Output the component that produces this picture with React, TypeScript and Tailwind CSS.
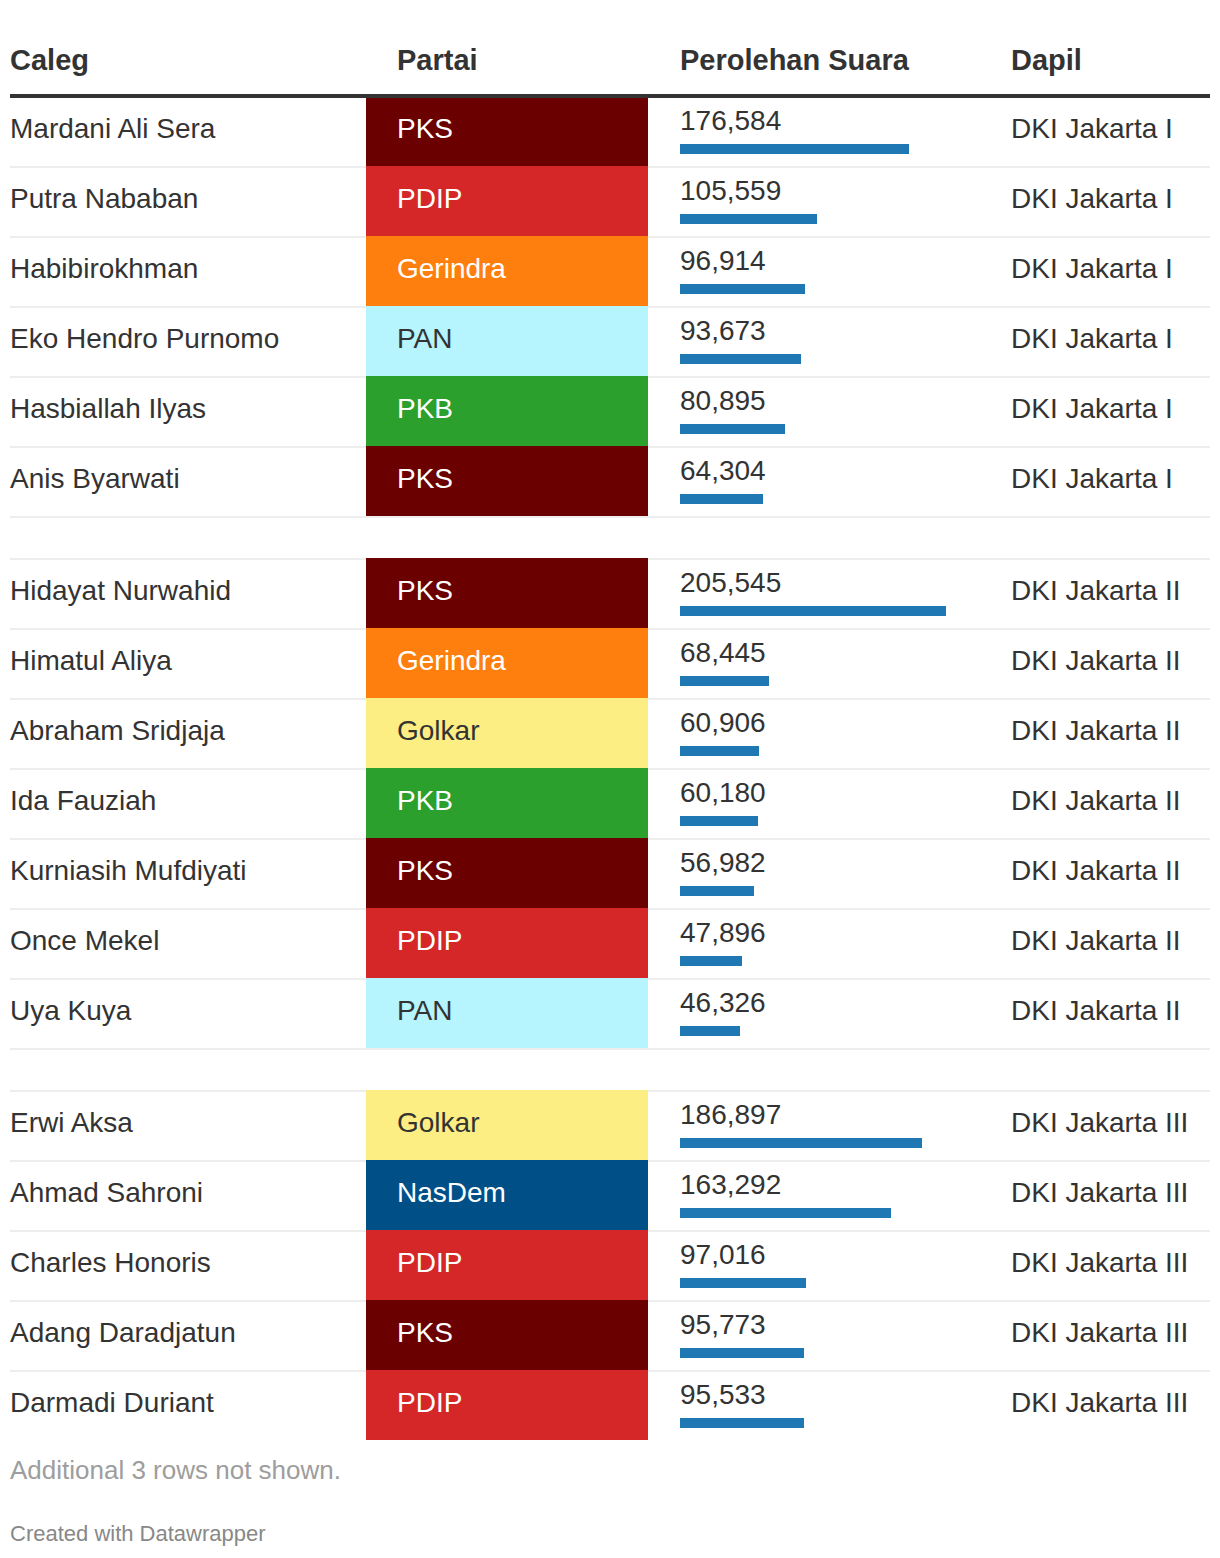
import clsx from "clsx";

type Row = { name: string; party: string; votes: number; dapil: string };

const partyStyle: Record<string, string> = {
  PKS: "bg-[#6b0000] text-white",
  PDIP: "bg-[#d62728] text-white",
  Gerindra: "bg-[#ff7f0e] text-white",
  PAN: "bg-[#b6f4fe] text-[#333]",
  PKB: "bg-[#2ca02c] text-white",
  Golkar: "bg-[#fdee84] text-[#333]",
  NasDem: "bg-[#005087] text-white",
};

const groups: Row[][] = [
  [
    { name: "Mardani Ali Sera", party: "PKS", votes: 176584, dapil: "DKI Jakarta I" },
    { name: "Putra Nababan", party: "PDIP", votes: 105559, dapil: "DKI Jakarta I" },
    { name: "Habibirokhman", party: "Gerindra", votes: 96914, dapil: "DKI Jakarta I" },
    { name: "Eko Hendro Purnomo", party: "PAN", votes: 93673, dapil: "DKI Jakarta I" },
    { name: "Hasbiallah Ilyas", party: "PKB", votes: 80895, dapil: "DKI Jakarta I" },
    { name: "Anis Byarwati", party: "PKS", votes: 64304, dapil: "DKI Jakarta I" },
  ],
  [
    { name: "Hidayat Nurwahid", party: "PKS", votes: 205545, dapil: "DKI Jakarta II" },
    { name: "Himatul Aliya", party: "Gerindra", votes: 68445, dapil: "DKI Jakarta II" },
    { name: "Abraham Sridjaja", party: "Golkar", votes: 60906, dapil: "DKI Jakarta II" },
    { name: "Ida Fauziah", party: "PKB", votes: 60180, dapil: "DKI Jakarta II" },
    { name: "Kurniasih Mufdiyati", party: "PKS", votes: 56982, dapil: "DKI Jakarta II" },
    { name: "Once Mekel", party: "PDIP", votes: 47896, dapil: "DKI Jakarta II" },
    { name: "Uya Kuya", party: "PAN", votes: 46326, dapil: "DKI Jakarta II" },
  ],
  [
    { name: "Erwi Aksa", party: "Golkar", votes: 186897, dapil: "DKI Jakarta III" },
    { name: "Ahmad Sahroni", party: "NasDem", votes: 163292, dapil: "DKI Jakarta III" },
    { name: "Charles Honoris", party: "PDIP", votes: 97016, dapil: "DKI Jakarta III" },
    { name: "Adang Daradjatun", party: "PKS", votes: 95773, dapil: "DKI Jakarta III" },
    { name: "Darmadi Duriant", party: "PDIP", votes: 95533, dapil: "DKI Jakarta III" },
  ],
];

const maxVotes = 205545;
const maxBar = 266;
const cols = "grid grid-cols-[356px_282px_363px_199px]";

function TableRow({ row, first }: { row: Row; first: boolean }) {
  const line = first ? "" : "border-t-2 border-[#eee]";
  return (
    <div className={cols}>
      <div className={clsx("h-full", line)}>
        <div className="h-[68px] pt-[15px] leading-[32px]">{row.name}</div>
      </div>
      <div
        className={clsx(
          partyStyle[row.party],
          !first && "border-t-2 border-transparent"
        )}
      >
        <div className="h-[68px] pt-[15px] pl-[31px] leading-[32px]">{row.party}</div>
      </div>
      <div className={line}>
        <div className="h-[68px] pt-[9px] pl-[32px]">
          <div className="leading-[28px]">{row.votes.toLocaleString("en-US")}</div>
          <div
            className="mt-[9px] h-[10px] bg-[#1f77b4]"
            style={{ width: Math.round((row.votes / maxVotes) * maxBar) }}
          />
        </div>
      </div>
      <div className={line}>
        <div className="h-[68px] pt-[15px] leading-[32px]">{row.dapil}</div>
      </div>
    </div>
  );
}

export default function App() {
  return (
    <div className="min-h-screen bg-white px-[10px] font-['Liberation_Sans',Arial,sans-serif] text-[#333]">
      <div className="w-[1200px]">
        <div className={clsx(cols, "border-b-4 border-[#333] text-[29px] font-bold leading-[32px]")}>
          <div className="pt-[44px] pb-[18px]">Caleg</div>
          <div className="pt-[44px] pb-[18px] pl-[31px]">Partai</div>
          <div className="pt-[44px] pb-[18px] pl-[32px]">Perolehan Suara</div>
          <div className="pt-[44px] pb-[18px]">Dapil</div>
        </div>

        <div className="text-[28px]">
          {groups.map((group, gi) => (
            <div key={gi}>
              {gi > 0 && <div className="h-[40px]" />}
              <div className={clsx(gi < groups.length - 1 && "border-b-2 border-[#eee]")}>
                {group.map((row, ri) => (
                  <TableRow key={row.name} row={row} first={gi === 0 && ri === 0} />
                ))}
              </div>
            </div>
          ))}
        </div>

        <p className="mt-[15px] text-[26px] leading-[30px] text-[#9d9d9d]">
          Additional 3 rows not shown.
        </p>
        <p className="mt-[36px] text-[22px] leading-[26px] text-[#888]">
          Created with Datawrapper
        </p>
      </div>
    </div>
  );
}
